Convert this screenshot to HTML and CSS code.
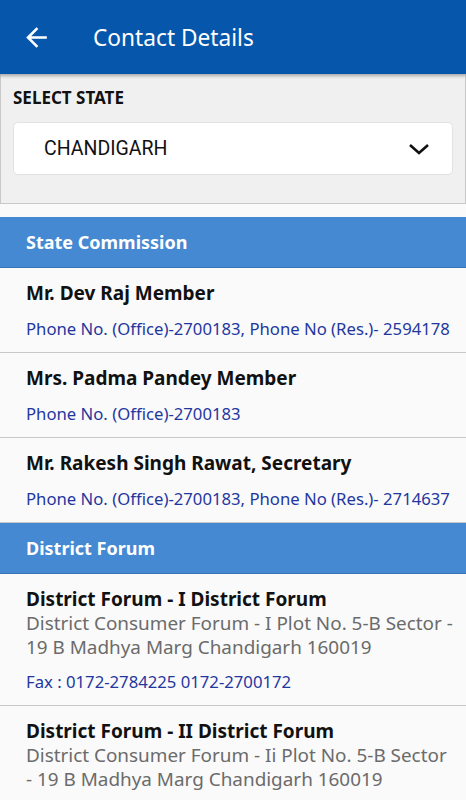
FILE: index.html
```html
<!DOCTYPE html>
<html lang="en">
<head>
    <meta charset="UTF-8">
    <meta name="viewport" content="width=device-width, initial-scale=1.0">
    <title>Contact Details</title>
    <link rel="stylesheet" href="styles.css">
</head>
<body>

<div class="toolbar">
    <svg class="back" width="31" height="31" viewBox="0 0 24 24">
        <path d="M20 11H7.83l5.59-5.59L12 4l-8 8 8 8 1.41-1.41L7.83 13H20v-2z" fill="#fff"/>
    </svg>
    <span class="title">Contact Details</span>
</div>

<div class="state-panel">
    <div class="label">SELECT STATE</div>
    <div class="dropdown">
        <span>CHANDIGARH</span>
        <svg width="22" height="14" viewBox="0 0 22 14">
            <path d="M2 3l9 8 9-8" fill="none" stroke="#111" stroke-width="2.6"/>
        </svg>
    </div>
</div>

<div class="section-head">State Commission</div>
<div class="item">
    <div class="name">Mr. Dev Raj Member</div>
    <div class="phone">Phone No. (Office)-2700183, Phone No (Res.)- 2594178</div>
</div>
<div class="item">
    <div class="name">Mrs. Padma Pandey Member</div>
    <div class="phone">Phone No. (Office)-2700183</div>
</div>
<div class="item">
    <div class="name">Mr. Rakesh Singh Rawat, Secretary</div>
    <div class="phone">Phone No. (Office)-2700183, Phone No (Res.)- 2714637</div>
</div>

<div class="section-head">District Forum</div>
<div class="item">
    <div class="name">District Forum - I District Forum</div>
    <div class="address">District Consumer Forum - I Plot No. 5-B Sector - 19 B Madhya Marg Chandigarh 160019</div>
    <div class="phone">Fax : 0172-2784225 0172-2700172</div>
</div>
<div class="item">
    <div class="name">District Forum - II District Forum</div>
    <div class="address">District Consumer Forum - Ii Plot No. 5-B Sector - 19 B Madhya Marg Chandigarh 160019</div>
    <div class="phone">Fax : 0172-2784225 0172-2700172</div>
</div>

</body>
</html>
```

FILE: styles.css
```css
body {
    font-family: "Noto Sans", sans-serif;
    margin: 0;
    background-color: #fafafa;
    color: #111;
}
.toolbar {
    height: 74px;
    background-color: #0657ab;
    display: flex;
    align-items: center;
    padding-left: 21px;
    box-shadow: 0 2px 3px rgba(0, 0, 0, 0.3);
    position: relative;
}
.back {
    margin-right: 41px;
}
.title {
    color: white;
    font-size: 22.7px;
    line-height: 30px;
    margin-top: 2px;
}
.state-panel {
    background: #f0f0f0;
    border: 1px solid #c8c8c8;
    border-top: none;
    padding: 13px 12px 28px;
}
.label {
    font-weight: bold;
    font-size: 17px;
    line-height: 22px;
    margin-bottom: 13px;
}
.dropdown {
    box-sizing: border-box;
    background: white;
    border: 1px solid #e2e2e2;
    border-radius: 5px;
    height: 53px;
    display: flex;
    align-items: center;
    justify-content: space-between;
    padding: 0 22px 0 30px;
    font-family: Roboto, sans-serif;
    font-size: 19.5px;
}
.section-head {
    margin-top: 13px;
    background: #4589d2;
    color: white;
    font-weight: bold;
    font-size: 18px;
    height: 50px;
    display: flex;
    align-items: center;
    padding-left: 26px;
    border-bottom: 1px solid #3a74b6;
}
.item + .section-head {
    margin-top: 0;
}
.item {
    padding: 14px 10px 12px 26px;
    border-bottom: 1px solid #c8c8c8;
}
.name {
    font-weight: bold;
    font-size: 19px;
    line-height: 23px;
}
.address {
    color: #6b6b6b;
    font-size: 18.9px;
    line-height: 24px;
}
.phone {
    color: #1f379f;
    font-size: 16.7px;
    line-height: 22px;
    margin-top: 13px;
}
.address + .phone {
    margin-top: 12px;
}
```
